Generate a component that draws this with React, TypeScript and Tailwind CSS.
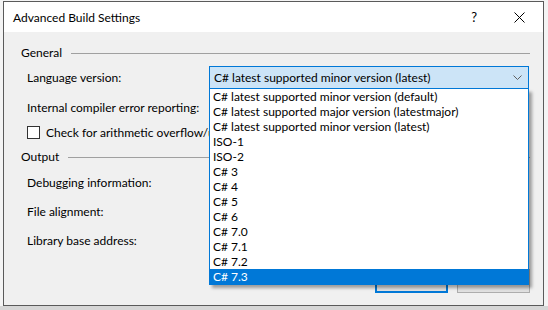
const items = [
  "C# latest supported minor version (default)",
  "C# latest supported major version (latestmajor)",
  "C# latest supported minor version (latest)",
  "ISO-1",
  "ISO-2",
  "C# 3",
  "C# 4",
  "C# 5",
  "C# 6",
  "C# 7.0",
  "C# 7.1",
  "C# 7.2",
  "C# 7.3",
];

const GroupHeader = ({ title, className }: { title: string; className?: string }) => (
  <div className={"flex items-center h-[16px] pl-[17px] pr-[13px] " + (className ?? "")}>
    <span>{title}</span>
    <div className="flex-1 ml-[9px] h-px bg-[#a0a0a0]" />
  </div>
);

const Row = ({ label, className, children }: { label: string; className?: string; children?: React.ReactNode }) => (
  <div className={"flex items-center h-[23px] pl-[23px] " + (className ?? "")}>
    <div className="w-[182px] shrink-0 whitespace-nowrap">{label}</div>
    {children ?? <div className="w-[320px] h-[23px] border border-[#adadad] bg-white" />}
  </div>
);

const Chevron = () => (
  <svg width="9" height="6" viewBox="0 0 9 6" className="absolute right-[6px] top-[8px]">
    <polyline points="0.5,0.5 4.5,4.5 8.5,0.5" fill="none" stroke="#606060" strokeWidth="1" />
  </svg>
);

const App = () => {
  return (
    <main className="w-[548px] h-[310px] bg-[#f4f4f4] overflow-hidden font-['Lato',sans-serif] text-[12px] text-black leading-none">
      <div className="ml-[3px] mt-[1px] w-[541px] h-[305px] border border-[#5a5a5a] bg-[#f0f0f0] flex flex-col">
        {/* title bar */}
        <div className="h-[30px] bg-white flex items-center pl-[9px] pt-px">
          <span>Advanced Build Settings</span>
          <span className="ml-auto mr-[37px] text-[13px]">?</span>
          <svg width="11" height="11" viewBox="0 0 11 11" className="mr-[18px]">
            <line x1="0.5" y1="0.5" x2="10.5" y2="10.5" stroke="#000" strokeWidth="1" />
            <line x1="10.5" y1="0.5" x2="0.5" y2="10.5" stroke="#000" strokeWidth="1" />
          </svg>
        </div>

        <GroupHeader title="General" className="mt-[13px]" />
        <Row label="Language version:" className="mt-[5px]">
          <div className="relative w-[320px] h-[23px] border border-[#0078d7] bg-[#cce4f7] flex items-center pl-[4px]">
            <span>C# latest supported minor version (latest)</span>
            <Chevron />
            {/* open dropdown list */}
            <div className="absolute left-[-1px] top-[22px] w-[320px] bg-white border border-t-0 border-[#0078d7] shadow-[3px_3px_3px_rgba(0,0,0,0.35)] z-10">
              {items.map((it, i) => (
                <div
                  key={it}
                  className={
                    "h-[15px] flex items-center pl-[3px] " +
                    (i === items.length - 1 ? "bg-[#0078d7] text-white" : "")
                  }
                >
                  {it}
                </div>
              ))}
            </div>
          </div>
        </Row>
        <Row label="Internal compiler error reporting:" className="mt-[7px]" />
        <div className="flex items-center h-[17px] mt-[5px] pl-[23px]">
          <div className="w-[13px] h-[13px] border border-[#333] bg-white shrink-0" />
          {/* the open list covers the rest of this label */}
          <span className="ml-[6px] w-[163px] overflow-hidden whitespace-nowrap">Check for arithmetic overflow/underflow</span>
        </div>

        <GroupHeader title="Output" className="mt-[8px]" />
        <Row label="Debugging information:" className="mt-[6px]" />
        <Row label="File alignment:" className="mt-[6px]" />
        <Row label="Library base address:" className="mt-[6px]" />

        <div className="flex justify-end gap-[9px] mt-[17px] pr-[13px]">
          <button className="w-[73px] h-[24px] border-2 border-[#0078d7] bg-[#e1e1e1]">OK</button>
          <button className="w-[73px] h-[24px] border border-[#adadad] bg-[#e1e1e1]">Cancel</button>
        </div>
      </div>
      <div className="h-[4px] bg-[#d6d6d6]" />
    </main>
  );
};

export default App;
